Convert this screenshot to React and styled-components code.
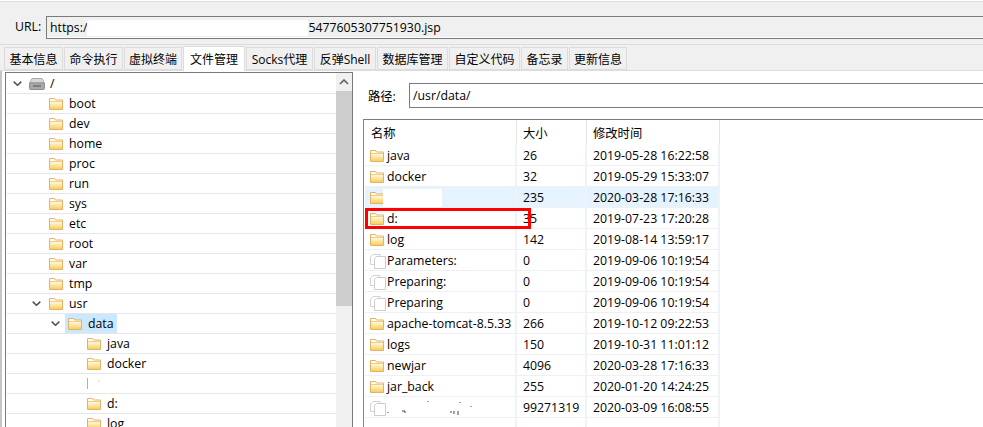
import React from 'react';
import styled, { createGlobalStyle } from 'styled-components';

const GlobalStyle = createGlobalStyle`
  html, body {
    margin: 0;
    padding: 0;
    background: #fff;
  }
  * {
    box-sizing: border-box;
  }
`;

const font = `"Open Sans", "Noto Sans CJK SC", sans-serif`;

const Page = styled.div`
  width: 983px;
  height: 427px;
  overflow: hidden;
  display: flex;
  flex-direction: column;
  background: #fff;
  color: #000;
  font-family: ${font};
  font-size: 12.3px;
`;

const TopStrip = styled.div`
  height: 15px;
  margin-top: 1px;
  border-top: 1px solid #dcdcdc;
  background: #f0f0f0;
`;

const UrlBar = styled.div`
  height: 29px;
  display: flex;
  align-items: flex-start;
  background: #f0f0f0;
  border-bottom: 1px solid #dcdcdc;
  padding-left: 15px;
`;

const UrlLabel = styled.label`
  width: 31px;
  line-height: 22px;
`;

const UrlBox = styled.div`
  flex: 1;
  height: 23px;
  display: flex;
  align-items: center;
  padding-left: 3px;
  border: 1px solid #7a7a7a;
  border-right: 0;
  box-shadow: inset 0 -1px 0 #fff;
`;

const UrlMask = styled.span`
  width: 221px;
  height: 16px;
  flex: none;
  background: #fff;
`;

const TabRow = styled.div`
  height: 26px;
  display: flex;
  align-items: flex-end;
  padding-left: 4px;
  background: #f0f0f0;
  border-bottom: 1px solid #dcdcdc;
`;

const Tab = styled.div`
  width: ${(p) => p.$w}px;
  height: ${(p) => (p.$active ? 25 : 23)}px;
  margin-bottom: ${(p) => (p.$active ? -1 : 0)}px;
  margin-right: 1px;
  display: flex;
  align-items: center;
  justify-content: center;
  white-space: nowrap;
  font-size: 12px;
  background: ${(p) => (p.$active ? '#fff' : '#f0f0f0')};
  border: 1px solid #dcdcdc;
  border-bottom: ${(p) => (p.$active ? 0 : '1px solid #dcdcdc')};
`;

const Panels = styled.div`
  flex: 1;
  min-height: 0;
  display: flex;
  padding-top: 1px;
  border-left: 2px solid #c6c6c6;
`;

const TreePanel = styled.div`
  width: 348px;
  margin-left: 3px;
  display: flex;
  border: 1px solid #7a7a7a;
  border-bottom: 0;
`;

const Tree = styled.div`
  flex: 1;
  padding: 1px 0 0 1px;
  overflow: hidden;
`;

const TreeRow = styled.div`
  height: 20px;
  flex: none;
  display: flex;
  align-items: center;
  padding-left: ${(p) => 4 + p.$depth * 19}px;
  border-bottom: 1px solid #e6e6e6;
`;

const Toggle = styled.span`
  width: 17px;
  flex: none;
  display: flex;
  align-items: center;
  padding-left: 2px;
`;

const Node = styled.span`
  height: 19px;
  display: flex;
  align-items: center;
  gap: 6px;
  padding: 0 3px 0 ${(p) => (p.$selected ? 3 : 2)}px;
  margin-left: ${(p) => (p.$selected ? -1 : 0)}px;
  background: ${(p) => (p.$selected ? '#cce8ff' : 'transparent')};
`;

const ScrollTrack = styled.div`
  width: 16px;
  flex: none;
  display: flex;
  flex-direction: column;
  background: #f0f0f0;
`;

const ScrollArrow = styled.div`
  height: 18px;
  display: flex;
  align-items: center;
  justify-content: center;
`;

const ScrollThumb = styled.div`
  height: 215px;
  background: #cdcdcd;
`;

const FilePanel = styled.div`
  flex: 1;
  min-width: 0;
  display: flex;
  flex-direction: column;
  padding: 11px 0 0 10px;
`;

const PathRow = styled.div`
  height: 25px;
  display: flex;
  align-items: center;
  padding-left: 5px;
`;

const PathLabel = styled.label`
  width: 41px;
  flex: none;
`;

const PathInput = styled.div`
  flex: 1;
  height: 25px;
  display: flex;
  align-items: center;
  padding-left: 3px;
  border: 1px solid #7a7a7a;
  border-right: 0;
`;

const Table = styled.div`
  position: relative;
  flex: 1;
  margin-top: 11px;
  display: flex;
  flex-direction: column;
  padding-left: 1px;
  border-top: 1px solid #7a7a7a;
  border-left: 1px solid #828790;
`;

const HeadRow = styled.div`
  width: 355px;
  height: 25px;
  flex: none;
  display: grid;
  grid-template-columns: 152px 70px 133px;
`;

const HeadCell = styled.div`
  display: flex;
  align-items: center;
  padding-left: ${(p) => p.$pad}px;
  border-right: 1px solid #e5e5e5;
`;

const Row = styled.div`
  width: 355px;
  height: 21px;
  flex: none;
  display: grid;
  grid-template-columns: 152px 70px 133px;
  background: ${(p) => (p.$hover ? '#e5f3ff' : 'transparent')};
  box-shadow: inset 0 -1px 0 #f0f0f0;
`;

const Cell = styled.div`
  display: flex;
  align-items: center;
  white-space: nowrap;
  overflow: hidden;
  padding-left: ${(p) => p.$pad}px;
  border-right: 2px solid #eef3f9;
`;

const NameCell = styled(Cell)`
  gap: 3px;
`;

const NameMask = styled.span`
  width: ${(p) => p.$w}px;
  height: 18px;
  margin-left: -4px;
  flex: none;
  background: #fff;
`;

const Filler = styled.div`
  width: 355px;
  flex: 1;
  display: grid;
  grid-template-columns: 152px 70px 133px;
`;

const FillerCell = styled.div`
  border-right: 2px solid #eef3f9;
`;

const RedBox = styled.div`
  position: absolute;
  left: 1px;
  top: 88px;
  width: 166px;
  height: 21px;
  border: 3px solid #f00;
  pointer-events: none;
`;

const gradientDefs = (
  <svg width="0" height="0" style={{ position: 'absolute' }}>
    <defs>
      <linearGradient id="folderFill" x1="0" y1="0" x2="0" y2="1">
        <stop offset="0" stopColor="#fff9dc" />
        <stop offset="1" stopColor="#f7cf5e" />
      </linearGradient>
    </defs>
  </svg>
);

function FolderIcon() {
  return (
    <svg width="14" height="13" viewBox="0 0 14 13" style={{ flex: 'none' }}>
      <path d="M.5 1.5h5l1 1.5h7v9.5H.5z" fill="#fffef6" stroke="#e6b066" />
      <rect x="1" y="5" width="12" height="7" fill="url(#folderFill)" />
      <path d="M1 4.5h12" stroke="#efcb8c" />
    </svg>
  );
}

function FileIcon() {
  return (
    <svg width="16" height="16" viewBox="0 0 16 16" style={{ flex: 'none', marginRight: -2 }}>
      <path d="M4.5 11.5H.5V4L3 1.5h7v2" fill="#fff" stroke="#d2d2d2" />
      <path d="M4.5 15.5V5.5L6.5 3.5h9v12z" fill="#fff" stroke="#cdcdcd" />
    </svg>
  );
}

function DiskIcon() {
  return (
    <svg width="16" height="12" viewBox="0 0 16 12" style={{ flex: 'none', margin: '0 -1px' }}>
      <path d="M3 .5h10L15.5 5H.5z" fill="#d8d8d8" stroke="#a8a8a8" />
      <rect x=".5" y="5" width="15" height="6.5" rx="1" fill="#a9a9a9" stroke="#8e8e8e" />
      <rect x="4" y="7" width="8" height="2" fill="#7f7f7f" />
    </svg>
  );
}

function BlankedFolderIcon() {
  return (
    <svg width="14" height="13" viewBox="0 0 14 13" style={{ flex: 'none' }}>
      <path d="M.5 1v11" stroke="#e3a956" />
      <path d="M11 4h2" stroke="#edd9a8" />
    </svg>
  );
}

function Specks() {
  return (
    <svg width="96" height="18" viewBox="0 0 96 18" style={{ flex: 'none', marginLeft: -3 }}>
      <path d="M4 13v1M18 12h3v2M44 2v1M66 13h2M70 12v3M74 12v4M76 3v1M87 7v1" stroke="#444" fill="none" />
    </svg>
  );
}

function Chevron({ color = '#555' }) {
  return (
    <svg width="9" height="5" viewBox="0 0 9 5">
      <path d="M.7.7l3.8 3.6L8.3.7" fill="none" stroke={color} strokeWidth="1.6" />
    </svg>
  );
}

const tabs = [
  ['基本信息', 59],
  ['命令执行', 59],
  ['虚拟终端', 58],
  ['文件管理', 62],
  ['Socks代理', 67],
  ['反弹Shell', 62],
  ['数据库管理', 71],
  ['自定义代码', 71],
  ['备忘录', 47],
  ['更新信息', 58],
];

const treeRows = [
  { name: '/', depth: 0, open: true, disk: true },
  { name: 'boot', depth: 1 },
  { name: 'dev', depth: 1 },
  { name: 'home', depth: 1 },
  { name: 'proc', depth: 1 },
  { name: 'run', depth: 1 },
  { name: 'sys', depth: 1 },
  { name: 'etc', depth: 1 },
  { name: 'root', depth: 1 },
  { name: 'var', depth: 1 },
  { name: 'tmp', depth: 1 },
  { name: 'usr', depth: 1, open: true },
  { name: 'data', depth: 2, open: true, selected: true },
  { name: 'java', depth: 3 },
  { name: 'docker', depth: 3 },
  { name: '', depth: 3, blanked: true },
  { name: 'd:', depth: 3 },
  { name: 'log', depth: 3 },
];

const files = [
  { name: 'java', size: '26', time: '2019-05-28 16:22:58' },
  { name: 'docker', size: '32', time: '2019-05-29 15:33:07' },
  { name: '', size: '235', time: '2020-03-28 17:16:33', mask: true, hover: true },
  { name: 'd:', size: '35', time: '2019-07-23 17:20:28' },
  { name: 'log', size: '142', time: '2019-08-14 13:59:17' },
  { name: 'Parameters:', size: '0', time: '2019-09-06 10:19:54', file: true },
  { name: 'Preparing:', size: '0', time: '2019-09-06 10:19:54', file: true },
  { name: 'Preparing', size: '0', time: '2019-09-06 10:19:54', file: true },
  { name: 'apache-tomcat-8.5.33', size: '266', time: '2019-10-12 09:22:53' },
  { name: 'logs', size: '150', time: '2019-10-31 11:01:12' },
  { name: 'newjar', size: '4096', time: '2020-03-28 17:16:33' },
  { name: 'jar_back', size: '255', time: '2020-01-20 14:24:25' },
  { name: '', size: '99271319', time: '2020-03-09 16:08:55', file: true, specks: true },
];

export default function App() {
  return (
    <Page>
      <GlobalStyle />
      {gradientDefs}
      <TopStrip />
      <UrlBar>
        <UrlLabel>URL:</UrlLabel>
        <UrlBox>
          https:/
          <UrlMask />
          5477605307751930.jsp
        </UrlBox>
      </UrlBar>
      <TabRow>
        {tabs.map(([label, w]) => (
          <Tab key={label} $w={w} $active={label === '文件管理'}>
            {label}
          </Tab>
        ))}
      </TabRow>
      <Panels>
        <TreePanel>
          <Tree>
            {treeRows.map((r, i) => (
              <TreeRow key={i} $depth={r.depth}>
                <Toggle>{r.open && <Chevron />}</Toggle>
                <Node $selected={r.selected}>
                  {r.disk ? <DiskIcon /> : r.blanked ? <BlankedFolderIcon /> : <FolderIcon />}
                  {r.name}
                </Node>
              </TreeRow>
            ))}
          </Tree>
          <ScrollTrack>
            <ScrollArrow>
              <svg width="10" height="6" viewBox="0 0 10 6">
                <path d="M1 5l4-4 4 4" fill="none" stroke="#606060" strokeWidth="1.6" />
              </svg>
            </ScrollArrow>
            <ScrollThumb />
          </ScrollTrack>
        </TreePanel>
        <FilePanel>
          <PathRow>
            <PathLabel>路径:</PathLabel>
            <PathInput>/usr/data/</PathInput>
          </PathRow>
          <Table>
            <HeadRow>
              <HeadCell $pad={6}>名称</HeadCell>
              <HeadCell $pad={6}>大小</HeadCell>
              <HeadCell $pad={6}>修改时间</HeadCell>
            </HeadRow>
            {files.map((f, i) => (
              <Row key={i} $hover={f.hover}>
                <NameCell $pad={5}>
                  {f.file ? <FileIcon /> : <FolderIcon />}
                  {f.mask && <NameMask $w={59} />}
                  {f.specks && <Specks />}
                  {f.name}
                </NameCell>
                <Cell $pad={6}>{f.size}</Cell>
                <Cell $pad={6}>{f.time}</Cell>
              </Row>
            ))}
            <Filler>
              <FillerCell />
              <FillerCell />
              <FillerCell />
            </Filler>
            <RedBox />
          </Table>
        </FilePanel>
      </Panels>
    </Page>
  );
}
